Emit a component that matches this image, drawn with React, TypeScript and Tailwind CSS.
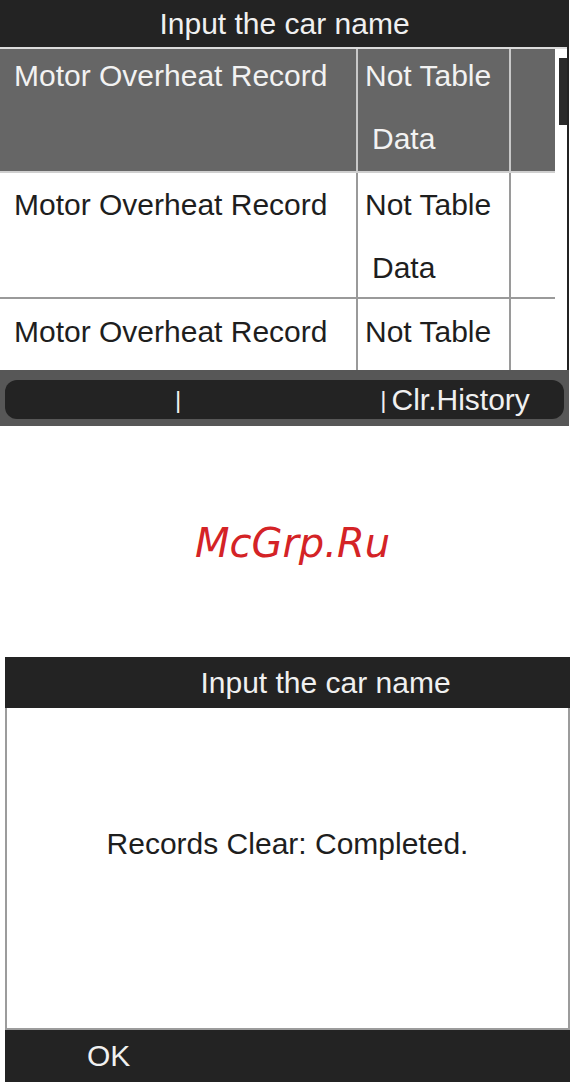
import React from "react";

type Row = {
  name: string;
  value: string[];
  selected?: boolean;
  height: string;
  shift: string;
};

const rows: Row[] = [
  { name: "Motor Overheat Record", value: ["Not Table", "Data"], selected: true, height: "h-[124px]", shift: "mt-[-5px]" },
  { name: "Motor Overheat Record", value: ["Not Table", "Data"], height: "h-[126px]", shift: "mt-0" },
  { name: "Motor Overheat Record", value: ["Not Table"], height: "h-[72px]", shift: "mt-[1px]" },
];

function RecordRow({ row, last }: { row: Row; last: boolean }) {
  const sel = row.selected;
  const divider = sel ? "border-[#c8c8c8]" : "border-[#9a9a9a]";
  return (
    <div
      className={`flex shrink-0 ${row.height} ${sel ? "bg-[#666666] text-[#f2f2f2]" : "bg-white text-[#1e1e1e]"} ${
        last ? "" : `border-b-2 ${sel ? "border-[#cfcfcf]" : "border-[#9a9a9a]"}`
      }`}
    >
      <div className={`w-[358px] shrink-0 border-r-2 ${divider} pl-[14px]`}>
        <div className={`${row.shift} leading-[63px]`}>{row.name}</div>
      </div>
      <div className={`w-[153px] shrink-0 border-r-2 ${divider} pl-[7px]`}>
        <div className={`${row.shift} leading-[63px]`}>
          {row.value.map((v, i) => (
            <div key={v} className={i > 0 ? "pl-[7px]" : ""}>
              {v}
            </div>
          ))}
        </div>
      </div>
      <div className="flex-1" />
    </div>
  );
}

function HistoryScreen() {
  return (
    <div className="w-[569px] h-[426px] bg-[#232323] flex flex-col">
      <div className="h-[47px] shrink-0 flex items-center justify-center text-[30px] leading-[36px] text-[#f0f0f0]">
        Input the car name
      </div>
      <div className="flex border-t-2 border-[#dcdcdc] h-[323px] shrink-0 mr-[2px] bg-white overflow-hidden">
        <div className="w-[555px] shrink-0 flex flex-col text-[30px]">
          {rows.map((r, i) => (
            <RecordRow key={i} row={r} last={i === rows.length - 1} />
          ))}
        </div>
        <div className="flex-1 bg-white relative">
          {/* scroll thumb */}
          <div className="absolute right-0 top-[9px] w-[8px] h-[67px] bg-[#2a2a2a]" />
        </div>
      </div>
      <div className="h-[56px] shrink-0 bg-[#575757] px-[5px] pt-[10px] pb-[7px]">
        <div className="h-[39px] rounded-[12px] bg-[#232323] flex items-center text-[30px] leading-[34px] text-[#f0f0f0]">
          <div className="w-[170px]" />
          <span className="text-[24px]">|</span>
          <div className="w-[199px]" />
          <span className="text-[24px]">|</span>
          <span className="ml-[5px]">Clr.History</span>
        </div>
      </div>
    </div>
  );
}

function ClearedScreen() {
  return (
    <div className="ml-[5px] w-[565px] h-[425px] bg-[#232323] flex flex-col">
      <div className="h-[51px] shrink-0 flex items-center justify-center pl-[76px] text-[30px] leading-[36px] text-[#f0f0f0]">
        Input the car name
      </div>
      <div className="h-[322px] shrink-0 bg-white border-x-2 border-b-2 border-[#9c9c9c] flex justify-center pt-[118px]">
        <div className="text-[30px] leading-[36px] text-[#1e1e1e]">Records Clear: Completed.</div>
      </div>
      <div className="flex-1 flex items-center pl-[82px] text-[30px] leading-[36px] text-[#f0f0f0]">OK</div>
    </div>
  );
}

export default function App() {
  return (
    <div className="w-[575px] h-[1082px] bg-white overflow-hidden font-['Liberation_Sans',Arial,sans-serif]">
      <HistoryScreen />
      <div className="h-[231px] flex items-center justify-center pt-[3px] pl-[10px]">
        <span className="font-['DejaVu_Sans',sans-serif] italic text-[40px] leading-[48px] text-[#d42326]">McGrp.Ru</span>
      </div>
      <ClearedScreen />
    </div>
  );
}
